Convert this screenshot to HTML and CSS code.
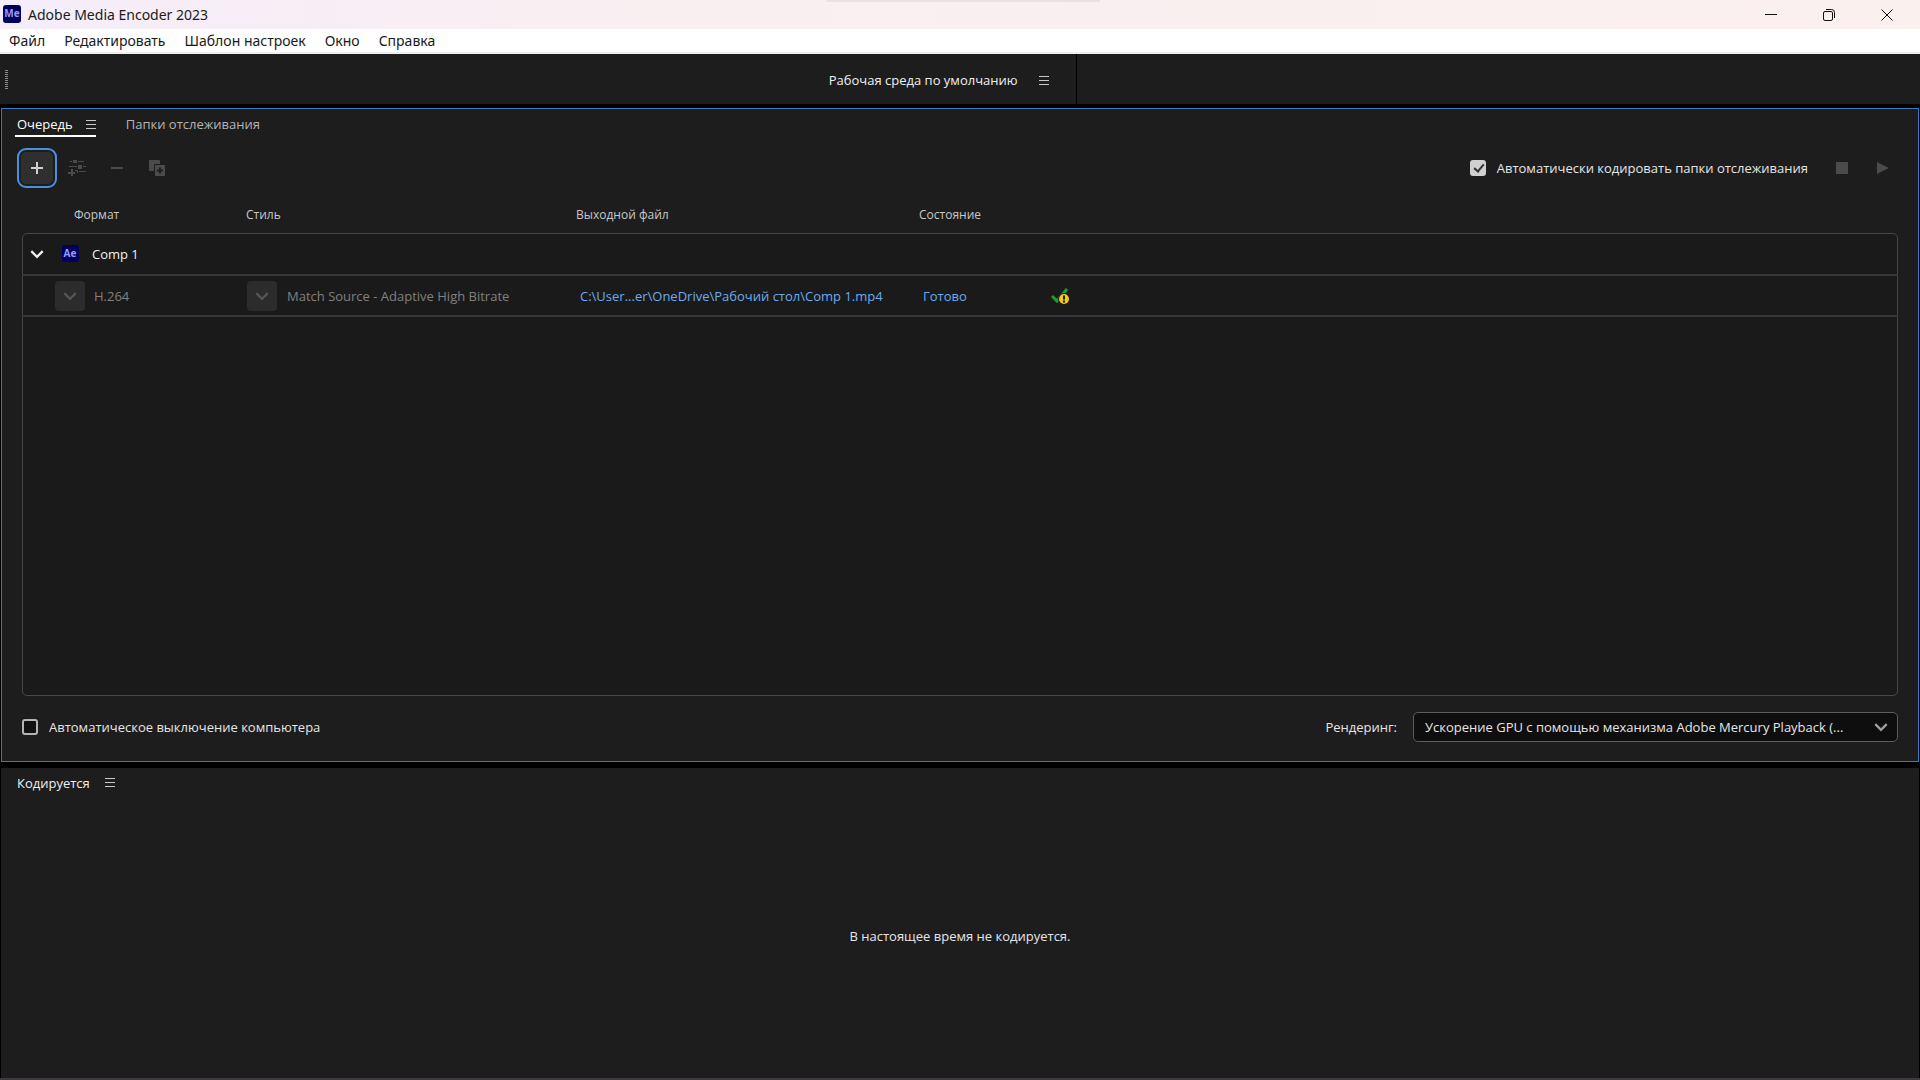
FILE: index.html
```html
<!DOCTYPE html>
<html lang="ru">
<head>
<meta charset="utf-8">
<title>Adobe Media Encoder 2023</title>
<meta name="viewport" content="width=device-width, initial-scale=1">
<link rel="stylesheet" href="styles.css">
</head>
<body>
  <header class="titlebar">
    <svg class="app-icon" viewBox="0 0 18 18" role="img" aria-label="Me">
      <rect width="18" height="18" rx="3" fill="#00005b"/>
      <text x="9" y="12" text-anchor="middle" class="app-icon-text">Me</text>
    </svg>
    <h1>Adobe Media Encoder 2023</h1>
    <div class="window-buttons">
      <button aria-label="Свернуть"><svg viewBox="0 0 12 12"><path d="M0 5.5h12"/></svg></button>
      <button aria-label="Восстановить"><svg viewBox="0 0 12 12"><rect x=".5" y="2.5" width="9" height="9" rx="1.5"/><path d="M3 .5h5.5a3 3 0 0 1 3 3v5.5"/></svg></button>
      <button aria-label="Закрыть"><svg viewBox="0 0 12 12"><path d="M.5.5l11 11M11.5.5l-11 11"/></svg></button>
    </div>
  </header>

  <nav class="menubar">
    <button>Файл</button>
    <button>Редактировать</button>
    <button>Шаблон настроек</button>
    <button>Окно</button>
    <button>Справка</button>
  </nav>

  <div class="workspace-bar">
    <div class="grip"></div>
    <div class="workspace">
      <button class="workspace-name">Рабочая среда по умолчанию</button>
      <button class="menu-btn" aria-label="Меню рабочей среды"></button>
    </div>
  </div>

  <main>
    <section class="panel queue">
      <div class="tabs">
        <div class="tab active">
          <button>Очередь</button>
          <button class="menu-btn" aria-label="Меню панели"></button>
        </div>
        <div class="tab"><button>Папки отслеживания</button></div>
      </div>

      <div class="toolbar">
        <button class="tool add" aria-label="Добавить источник">
          <svg viewBox="0 0 18 18"><path d="M9 3v12M3 9h12" stroke="#d0d0d0" stroke-width="2"/></svg>
        </button>
        <button class="tool" aria-label="Добавить вывод" disabled>
          <svg viewBox="0 0 18 18"><path d="M2 2h2v1H2zM5 1h4v3H5zM10 2h6v1h-6zM1 7h8v1H1zM10 6h4v4h-4zM15 7h3v1h-3zM7 11h3v3H9v-2H7zM11 12h7v1h-7z"/><path d="M3 10h2v3h2v2H5v2H3v-2H0v-2h3z"/></svg>
        </button>
        <button class="tool" aria-label="Удалить" disabled>
          <svg viewBox="0 0 18 18"><path d="M3 8h12v2H3z"/></svg>
        </button>
        <button class="tool" aria-label="Дублировать" disabled>
          <svg viewBox="0 0 18 18"><path d="M2 1h9a1 1 0 0 1 1 1v3H7a1 1 0 0 0-1 1v6H2a1 1 0 0 1-1-1V2a1 1 0 0 1 1-1z"/><path fill-rule="evenodd" d="M8 6h8a1 1 0 0 1 1 1v9a1 1 0 0 1-1 1H8a1 1 0 0 1-1-1V7a1 1 0 0 1 1-1zM11 8.5v2H9v2h2v2h2v-2h2v-2h-2v-2z"/></svg>
        </button>
        <label class="check auto-encode"><input type="checkbox" checked>Автоматически кодировать папки отслеживания</label>
        <button class="tool" aria-label="Остановить" disabled>
          <svg viewBox="0 0 18 18"><path d="M3 3h12v12H3z"/></svg>
        </button>
        <button class="tool" aria-label="Начать" disabled>
          <svg viewBox="0 0 18 18"><path d="M4 3l12 6-12 6z"/></svg>
        </button>
      </div>

      <div class="list">
        <table>
          <thead>
            <tr>
              <th class="col-format">Формат</th>
              <th class="col-style">Стиль</th>
              <th class="col-output">Выходной файл</th>
              <th>Состояние</th>
            </tr>
          </thead>
          <tbody>
            <tr class="source">
              <td colspan="4">
                <div class="cell">
                  <button class="twirl" aria-label="Свернуть группу"><svg viewBox="0 0 14 14"><path class="chevron" d="M2 4.5l5 5 5-5"/></svg></button>
                  <svg class="comp-icon" viewBox="0 0 18 18" role="img" aria-label="Ae">
                    <rect width="17" height="17" rx="3" fill="#00005b"/>
                    <text x="8" y="12" text-anchor="middle" class="app-icon-text">Ae</text>
                  </svg>
                  <span>Comp 1</span>
                </div>
              </td>
            </tr>
            <tr class="output">
              <td>
                <div class="cell format">
                  <button class="drop" aria-label="Выбрать формат" disabled><svg viewBox="0 0 14 14"><path class="chevron" d="M2 4.5l5 5 5-5"/></svg></button>
                  <span>H.264</span>
                </div>
              </td>
              <td>
                <div class="cell">
                  <button class="drop" aria-label="Выбрать стиль" disabled><svg viewBox="0 0 14 14"><path class="chevron" d="M2 4.5l5 5 5-5"/></svg></button>
                  <span>Match Source - Adaptive High Bitrate</span>
                </div>
              </td>
              <td><a href="#">C:\User...er\OneDrive\Рабочий стол\Comp 1.mp4</a></td>
              <td>
                <div class="cell">
                  <a href="#" class="state">Готово</a>
                  <svg class="done-icon" viewBox="0 0 18 18">
                    <path d="M1 9l5 5L16 2" fill="none" stroke="#1e9e2c" stroke-width="3"/>
                    <circle cx="13" cy="12" r="6" fill="#1a1a1a"/>
                    <circle cx="13" cy="12" r="5" fill="#f0c818"/>
                    <path d="M12 8.5h2v4h-2zM12 13.5h2v2h-2z" fill="#1a1a1a"/>
                  </svg>
                </div>
              </td>
            </tr>
          </tbody>
        </table>
      </div>

      <div class="queue-footer">
        <label class="check"><input type="checkbox">Автоматическое выключение компьютера</label>
        <label class="render-label" for="renderer">Рендеринг:</label>
        <div class="select">
          <select id="renderer">
            <option>Ускорение GPU с помощью механизма Adobe Mercury Playback (...</option>
          </select>
          <svg viewBox="0 0 14 14"><path class="chevron" d="M2 4.5l5 5 5-5"/></svg>
        </div>
      </div>
    </section>

    <section class="panel encoding">
      <div class="tabs">
        <div class="tab current">
          <button>Кодируется</button>
          <button class="menu-btn" aria-label="Меню панели"></button>
        </div>
      </div>
      <p class="empty">В настоящее время не кодируется.</p>
    </section>
  </main>
</body>
</html>
```

FILE: styles.css
```css
* {
  box-sizing: border-box;
}

body {
  margin: 0;
  height: 100vh;
  display: flex;
  flex-direction: column;
  background-color: #000;
  color: #e6e6e6;
  font-family: "Open Sans", "Noto Sans", sans-serif;
  font-size: 13px;
  line-height: 18px;
}

button {
  padding: 0;
  border: none;
  background: none;
  color: inherit;
  font: inherit;
  display: flex;
  align-items: center;
  justify-content: center;
}

a {
  color: #6cabf0;
  text-decoration: none;
}

/* window title */
.titlebar {
  position: relative;
  display: flex;
  align-items: center;
  height: 29px;
  padding: 0 4px 0 3px;
  background: linear-gradient(to right, #f5edfa 0%, #f9eef1 30%, #faf0ee 100%);
  color: #1a1a1a;
}

.titlebar::before {
  content: "";
  position: absolute;
  top: 0;
  left: 43%;
  width: 274px;
  height: 2px;
  background-color: #ece2e4;
}

.app-icon {
  width: 18px;
  height: 18px;
  margin-bottom: 2px;
}

.app-icon-text {
  fill: #9999ff;
  font-size: 10px;
  font-weight: 700;
}

.titlebar h1 {
  margin: 0 0 0 7px;
  font-family: "Noto Sans", sans-serif;
  font-size: 14px;
  font-weight: 400;
}

.window-buttons {
  display: flex;
  margin-left: auto;
}

.window-buttons button {
  width: 58px;
  height: 29px;
}

.window-buttons svg {
  width: 12px;
  height: 12px;
  fill: none;
  stroke: #111;
}

.menubar {
  display: flex;
  gap: 19px;
  height: 25px;
  padding-left: 9px;
  background-color: #fff;
  border-bottom: 2px solid #f0f0f0;
  color: #1a1a1a;
  font-family: "Noto Sans", sans-serif;
  font-size: 14px;
}

/* workspace strip */
.workspace-bar {
  display: flex;
  align-items: center;
  height: 50px;
  margin-bottom: 4px;
  padding-left: 5px;
  background-color: #1d1d1d;
}

.grip {
  width: 3px;
  height: 19px;
  background: repeating-linear-gradient(to bottom, #8a8a8a 0 1px, transparent 1px 2px);
}

.workspace {
  display: flex;
  align-items: center;
  justify-content: flex-end;
  gap: 21px;
  width: 55.8%;
  height: 100%;
  padding: 2px 27px 0 0;
  border-right: 1px solid #000;
  color: #f0f0f0;
}

.menu-btn {
  width: 10px;
  height: 9px;
  border-top: 1px solid #c8c8c8;
  border-bottom: 1px solid #c8c8c8;
  background: linear-gradient(#c8c8c8, #c8c8c8) center / 10px 1px no-repeat;
}

/* panels */
main {
  flex: 1;
  display: flex;
  flex-direction: column;
  gap: 6px;
  padding: 0 1px;
  border-bottom: 2px solid #3c3a3c;
}

.panel {
  display: flex;
  flex-direction: column;
  background-color: #1d1d1d;
}

.queue {
  flex: 653;
  border: 1px solid #3f78bd;
  padding: 0 20px;
}

.encoding {
  flex: 311;
  padding: 0 16px;
}

.tabs {
  display: flex;
  gap: 30px;
  padding-top: 4px;
}

.queue .tabs {
  margin-left: -7px;
}

.tab {
  display: flex;
  align-items: center;
  gap: 15px;
  height: 24px;
  border-bottom: 2px solid transparent;
  color: #b4b4b4;
}

.tab.active {
  gap: 13px;
  padding-left: 2px;
  border-color: #fff;
  color: #fff;
}

.tab.current {
  color: #f0f0f0;
}

.toolbar {
  display: flex;
  align-items: center;
  height: 40px;
  margin: 11px -4px 0 -5px;
}

.tool {
  width: 40px;
  height: 40px;
}

.tool svg {
  width: 18px;
  height: 18px;
  fill: #4b4b4b;
}

.tool.add {
  border: 2px solid #4a90dc;
  border-radius: 9px;
  background-color: #2f2f2f;
  box-shadow: inset 0 0 0 2px #1d1d1d;
}

.check {
  display: flex;
  align-items: center;
  gap: 11px;
}

.check input {
  appearance: none;
  width: 16px;
  height: 16px;
  margin: 0;
  border: 2px solid #b4b4b4;
  border-radius: 3px;
  background-color: #111;
}

.check input:checked {
  position: relative;
  border-color: #d0d0d0;
  background-color: #d0d0d0;
}

.check input:checked::after {
  content: "";
  position: absolute;
  left: 4px;
  top: 0;
  width: 4px;
  height: 8px;
  border: solid #333;
  border-width: 0 2px 2px 0;
  transform: rotate(40deg);
}

.auto-encode {
  margin-left: auto;
  margin-right: 14px;
}

/* queue list, the frame starts under the header row */
.list {
  position: relative;
  flex: 1;
  margin-top: 6px;
}

.list::before {
  content: "";
  position: absolute;
  inset: 39px 0 0 0;
  border: 1px solid #464646;
  border-radius: 5px;
  background-color: #1a1a1a;
}

.list table {
  position: relative;
  width: 100%;
  table-layout: fixed;
  border-collapse: collapse;
}

th {
  height: 40px;
  padding: 2px 0 0;
  color: #c8c8c8;
  font-size: 12px;
  font-weight: 400;
  text-align: left;
}

.col-format {
  width: 224px;
  padding-left: 52px;
}

.col-style {
  width: 330px;
}

.col-output {
  width: 343px;
}

td {
  height: 41px;
  padding: 0 0 0 4px;
  border-bottom: 2px solid #383838;
}

.cell {
  display: flex;
  align-items: center;
}

.source .cell {
  padding-left: 3px;
  color: #f0f0f0;
}

.twirl {
  margin-right: 17px;
}

.twirl svg {
  width: 16px;
  height: 16px;
}

.chevron {
  fill: none;
  stroke: currentColor;
  stroke-width: 2;
}

.comp-icon {
  width: 18px;
  height: 18px;
  margin-right: 12px;
}

.output .cell {
  gap: 10px;
  color: #808080;
}

.output td:nth-child(2) {
  padding-left: 1px;
}

.output .format {
  gap: 9px;
  padding-left: 29px;
}

.drop {
  width: 30px;
  height: 30px;
  border-radius: 4px;
  background-color: #2c2c2c;
  color: #555;
}

.drop svg {
  width: 16px;
  height: 16px;
}

.state {
  width: 118px;
}

.done-icon {
  width: 18px;
  height: 18px;
}

.queue-footer {
  display: flex;
  align-items: center;
  height: 65px;
  padding-bottom: 3px;
}

.render-label {
  margin-left: auto;
  margin-right: 16px;
}

.select {
  position: relative;
  width: 485px;
}

.select select {
  appearance: none;
  width: 100%;
  height: 30px;
  padding: 0 40px 0 11px;
  border: 1px solid #5c5c5c;
  border-radius: 5px;
  background-color: #0e0e0e;
  color: #e6e6e6;
  font: inherit;
}

.select svg {
  position: absolute;
  right: 9px;
  top: 7px;
  width: 16px;
  height: 16px;
  color: #a0a0a0;
  pointer-events: none;
}

.empty {
  flex: 1;
  display: flex;
  align-items: center;
  justify-content: center;
  margin: 0 0 2px;
}
```
